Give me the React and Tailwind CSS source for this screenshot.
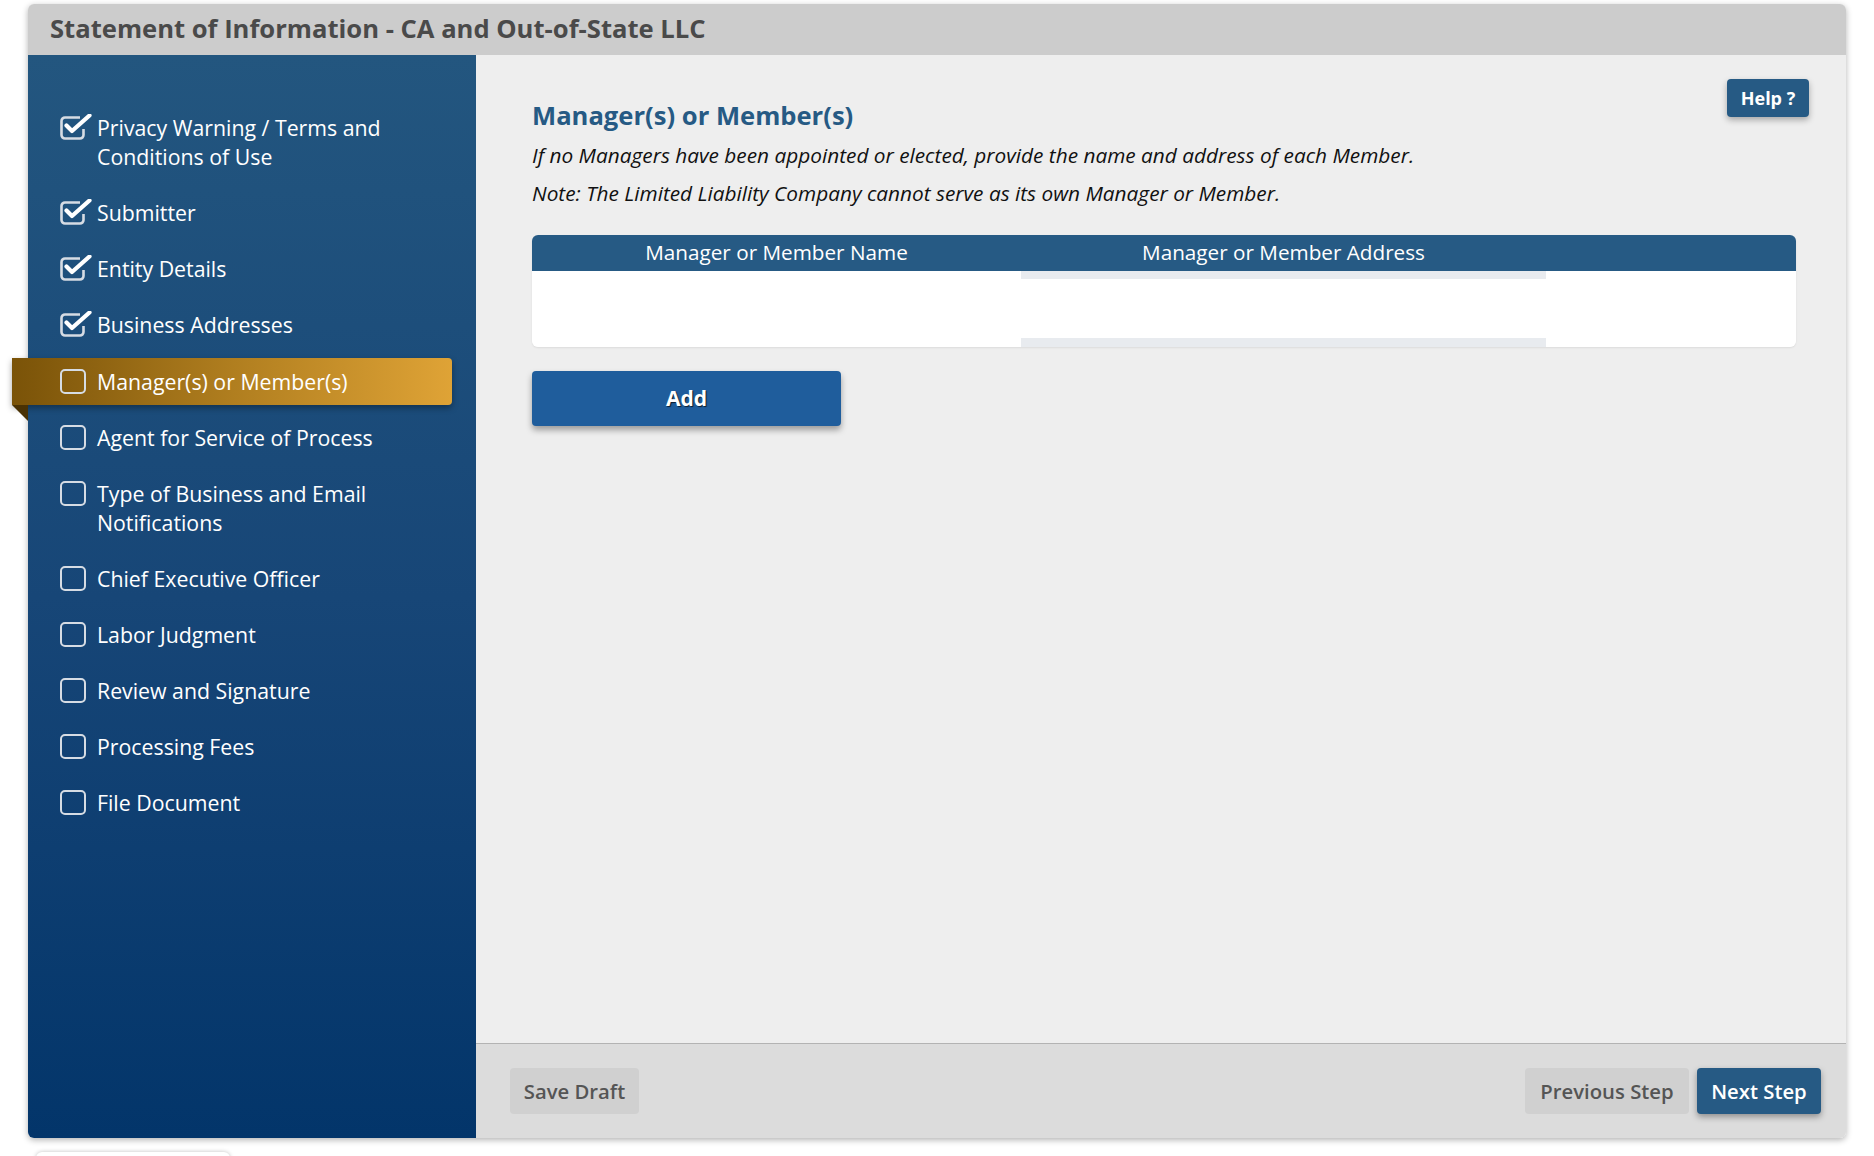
import React from "react";

const steps = [
  { label: ["Privacy Warning / Terms and", "Conditions of Use"], done: true },
  { label: ["Submitter"], done: true },
  { label: ["Entity Details"], done: true },
  { label: ["Business Addresses"], done: true },
  { label: ["Manager(s) or Member(s)"], active: true },
  { label: ["Agent for Service of Process"] },
  { label: ["Type of Business and Email", "Notifications"] },
  { label: ["Chief Executive Officer"] },
  { label: ["Labor Judgment"] },
  { label: ["Review and Signature"] },
  { label: ["Processing Fees"] },
  { label: ["File Document"] },
];

function CheckedBox() {
  return (
    <svg width="32" height="26" viewBox="0 0 32 26" className="shrink-0">
      <path
        d="M20 3.5 H5 a3.5 3.5 0 0 0 -3.5 3.5 v14 a3.5 3.5 0 0 0 3.5 3.5 h15 a3.5 3.5 0 0 0 3.5 -3.5 v-6"
        fill="none"
        stroke="#d6dce4"
        strokeWidth="2.6"
      />
      <path
        d="M6.5 11.5 L12 17 L29.5 1.5"
        fill="none"
        stroke="#ffffff"
        strokeWidth="4.2"
        strokeLinecap="round"
        strokeLinejoin="round"
      />
    </svg>
  );
}

function EmptyBox() {
  return (
    <div className="shrink-0 mt-[2px] w-[26px] h-[25px] rounded-[5px] border-[2.5px] border-[#d6dce4] mr-[6px]" />
  );
}

function Step({ step }) {
  const base =
    "relative ml-[-16px] w-[440px] pl-[48px] pr-3 py-[9px] flex items-start gap-[5px] text-white text-[21.3px] leading-[29px]";
  return (
    <div
      className={
        step.active
          ? base +
            " rounded-r-[4px] bg-linear-to-r from-[#7a5308] via-[#b07e1f] to-[#dfa336] shadow-[0_3px_6px_rgba(0,0,0,0.35)]"
          : base
      }
    >
      {step.done ? <CheckedBox /> : <EmptyBox />}
      <div className={step.done ? "relative top-[-1px]" : ""}>
        {step.label.map((l, i) => (
          <div key={i}>{l}</div>
        ))}
      </div>
      {step.active && (
        <div className="absolute left-0 top-full w-0 h-0 border-t-[16px] border-t-[#4a3204] border-l-[16px] border-l-transparent" />
      )}
    </div>
  );
}

export default function App() {
  return (
    <div className="min-h-screen bg-white pt-[4px] px-[28px] font-['Open_Sans',sans-serif]">
      <div className="rounded-[6px] shadow-[0_2px_6px_rgba(0,0,0,0.3)]">
        <div className="h-[51px] bg-[#cccccc] rounded-t-[6px] px-[22px] flex items-center">
          <h1 className="text-[25.6px] font-bold text-[#4a4a4a]">
            Statement of Information - CA and Out-of-State LLC
          </h1>
        </div>
        <div className="flex h-[1083px]">
          <aside className="w-[448px] shrink-0 rounded-bl-[6px] bg-linear-to-b from-[#23567f] via-[#174677] to-[#03356a] pt-[50px] flex flex-col gap-[9px]">
            {steps.map((s, i) => (
              <Step key={i} step={s} />
            ))}
          </aside>
          <main className="flex-1 flex flex-col bg-[#eeeeee] rounded-br-[6px]">
            <div className="relative flex-1 pl-[56px] pr-[50px] pt-[45px]">
              <button className="absolute top-[24px] right-[37px] w-[82px] h-[38px] rounded-[4px] bg-[#265a84] text-white text-[18px] font-bold shadow-[0_3px_6px_rgba(0,0,0,0.3)]">
                Help ?
              </button>
              <h2 className="text-[25.6px] leading-[32px] font-bold text-[#265a84]">
                Manager(s) or Member(s)
              </h2>
              <p className="mt-[9px] text-[20.8px] leading-[28px] italic text-[#111111]">
                If no Managers have been appointed or elected, provide the name and address of each Member.
              </p>
              <p className="mt-[10px] text-[20.8px] leading-[28px] italic text-[#111111]">
                Note: The Limited Liability Company cannot serve as its own Manager or Member.
              </p>
              <div className="mt-[28px] rounded-[6px] shadow-[0_1px_2px_rgba(0,0,0,0.08)]">
                <div className="flex h-[36px] bg-[#265a84] rounded-t-[6px] text-white text-[20.7px] items-center">
                  <div className="w-[489px] text-center">Manager or Member Name</div>
                  <div className="w-[525px] text-center">Manager or Member Address</div>
                  <div className="flex-1" />
                </div>
                <div className="flex h-[76px]">
                  <div className="w-[489px] bg-white rounded-bl-[6px]" />
                  <div className="w-[525px] bg-[#e8ebef] flex flex-col pt-[8px] pb-[9px]">
                    <div className="flex-1 bg-white" />
                  </div>
                  <div className="flex-1 bg-white rounded-br-[6px]" />
                </div>
              </div>
              <button className="mt-[24px] w-[309px] h-[55px] rounded-[4px] bg-[#1f5d9c] text-white text-[21px] font-bold [text-shadow:1px_1px_1px_rgba(0,0,0,0.7)] shadow-[0_4px_6px_rgba(0,0,0,0.35)]">
                Add
              </button>
            </div>
            <div className="h-[95px] border-t border-[#b3b3b3] bg-[#dcdcdc] rounded-br-[6px] flex items-center justify-between pl-[34px] pr-[25px]">
              <button className="h-[46px] w-[129px] rounded-[4px] bg-[#d0d0d0] text-[#555555] text-[20.3px] font-semibold">
                Save Draft
              </button>
              <div className="flex gap-[8px]">
                <button className="h-[46px] w-[164px] rounded-[4px] bg-[#d0d0d0] text-[#555555] text-[20.3px] font-semibold">
                  Previous Step
                </button>
                <button className="h-[46px] w-[124px] rounded-[4px] bg-[#265a84] text-white text-[20.3px] font-semibold shadow-[0_3px_6px_rgba(0,0,0,0.35)]">
                  Next Step
                </button>
              </div>
            </div>
          </main>
        </div>
      </div>
      <div className="mt-[14px] ml-[8px] w-[194px] h-[20px] rounded-[6px] bg-white shadow-[0_0_4px_rgba(0,0,0,0.25)]" />
    </div>
  );
}
